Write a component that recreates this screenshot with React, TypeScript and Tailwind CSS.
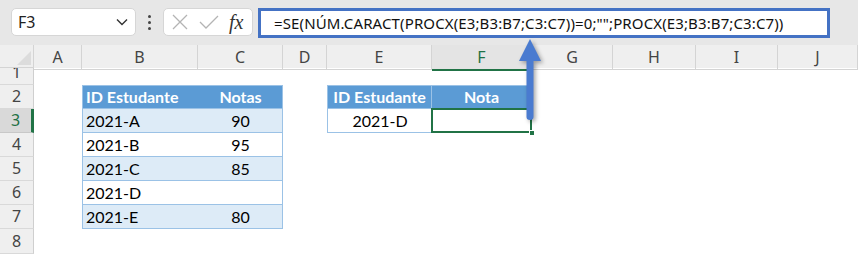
import React from "react";

const cellFont = { fontFamily: "Lato, 'Open Sans', sans-serif" };
const uiFont = { fontFamily: "'Noto Sans', 'Open Sans', sans-serif" };

const cols = ["A", "B", "C", "D", "E", "F", "G", "H", "I", "J"];

function ColHeader({ l }: { l: string }) {
  const sel = l === "F";
  return (
    <div
      className={`flex items-center justify-center border-r border-[#d4d4d4] text-[16px] ${
        sel ? "text-[#1e7145] border-b-2 border-b-[#217346] bg-[#e4e4e4]" : "text-[#444] border-b border-b-[#d4d4d4]"
      }`}
      style={uiFont}
    >
      {l}
    </div>
  );
}

function RowHeader({ n, row }: { n: number; row: number }) {
  const sel = n === 3;
  const rs = [
    "row-start-2",
    "row-start-3",
    "row-start-4",
    "row-start-5",
    "row-start-6",
    "row-start-7",
    "row-start-8",
    "row-start-9",
  ][row];
  return (
    <div
      className={`col-start-1 ${rs} flex items-end justify-center border-b text-[16px] leading-none pb-[4px] ${
        sel
          ? "bg-[#d9d9d9] text-[#1e7145] border-r-[3px] border-r-[#217346] border-b-[#c8c8c8]"
          : "bg-[#efefef] text-[#444] border-r border-r-[#cfcfcf] border-b-[#d9d9d9]"
      }`}
      style={uiFont}
    >
      {n}
    </div>
  );
}

export default function App() {
  const t1 = [
    ["2021-A", "90"],
    ["2021-B", "95"],
    ["2021-C", "85"],
    ["2021-D", ""],
    ["2021-E", "80"],
  ];
  return (
    <div className="relative w-[858px] h-[254px] overflow-hidden bg-white">
      {/* toolbar */}
      <div className="h-[45px] bg-[#e7e7e7] flex items-start pt-[8px]">
        <div className="ml-[11px] w-[125px] h-[28px] bg-white rounded-[5px] border border-[#d6d6d6] flex items-center justify-between pl-[6px] pr-[6px]">
          <span className="text-[16px] text-[#222]" style={uiFont}>F3</span>
          <svg width="14" height="10" viewBox="0 0 14 10">
            <path d="M2 2.5 L7 7.5 L12 2.5" fill="none" stroke="#333" strokeWidth="1.4" />
          </svg>
        </div>
        <div className="w-[27px] h-[28px] flex flex-col items-center justify-center gap-[3px]">
          <div className="w-[3px] h-[3px] bg-[#444] rounded-full" />
          <div className="w-[3px] h-[3px] bg-[#444] rounded-full" />
          <div className="w-[3px] h-[3px] bg-[#444] rounded-full" />
        </div>
        <div className="w-[90px] h-[28px] bg-white rounded-[5px] border border-[#d6d6d6] flex items-center pl-[7px] gap-[10px]">
          <svg width="18" height="18" viewBox="0 0 18 18">
            <path d="M2 2 L16 16 M16 2 L2 16" stroke="#b4b4b4" strokeWidth="1.3" />
          </svg>
          <svg width="20" height="16" viewBox="0 0 20 16">
            <path d="M1 8 L7 14 L19 2" fill="none" stroke="#b4b4b4" strokeWidth="1.3" />
          </svg>
          <span
            className="text-[20px] italic text-[#333] leading-none"
            style={{ fontFamily: "'Liberation Serif', serif" }}
          >
            fx
          </span>
        </div>
        <div className="ml-[5px] w-[572px] h-[30px] bg-white border-[3px] border-[#4472c4] flex items-center pl-[13px]">
          <span className="text-[15px] text-[#111] whitespace-nowrap tracking-[0.12px]" style={uiFont}>
            =SE(NÚM.CARACT(PROCX(E3;B3:B7;C3:C7))=0;"";PROCX(E3;B3:B7;C3:C7))
          </span>
        </div>
      </div>

      {/* sheet */}
      <div className="grid grid-cols-[34px_48px_116px_85px_44px_105px_100px_81px_83px_82px_1fr] grid-rows-[23px_17px_24px_24px_24px_24px_24px_24px_25px] bg-white">
        <div className="col-start-1 row-start-1 bg-[#efefef] border-r border-b border-[#d4d4d4] relative">
          <svg className="absolute right-[2px] bottom-[2px]" width="14" height="14" viewBox="0 0 14 14">
            <path d="M14 0 L14 14 L0 14 Z" fill="#dcdcdc" />
          </svg>
        </div>
        {cols.map((c) => (
          <div key={c} className="row-start-1 bg-[#efefef] grid">
            <ColHeader l={c} />
          </div>
        ))}
        <div className="row-start-1 bg-[#efefef] border-b border-[#d4d4d4]" />
        {[1, 2, 3, 4, 5, 6, 7, 8].map((n, i) => (
          <RowHeader key={n} n={n} row={i} />
        ))}

        {/* Table 1 */}
        <div className="col-start-3 col-span-2 row-start-3 row-span-6 flex flex-col" style={cellFont}>
          <div className="h-[24px] bg-[#5b9bd5] border border-[#9bc2e6] flex items-center text-white font-bold text-[16px]">
            <div className="w-[116px] pl-[3px]">ID Estudante</div>
            <div className="flex-1 text-center">Notas</div>
          </div>
          {t1.map((r, i) => (
            <div
              key={r[0]}
              className={`h-[24px] border-x border-b border-[#9bc2e6] flex items-center text-[16px] text-black ${
                i % 2 === 0 ? "bg-[#ddebf7]" : "bg-white"
              }`}
            >
              <div className="w-[116px] pl-[3px]">{r[0]}</div>
              <div className="flex-1 text-center">{r[1]}</div>
            </div>
          ))}
        </div>

        {/* Table 2 */}
        <div className="col-start-6 col-span-2 row-start-3 row-span-2 flex flex-col" style={cellFont}>
          <div className="h-[24px] bg-[#5b9bd5] border border-[#9bc2e6] flex items-center text-white font-bold text-[16px]">
            <div className="w-[104px] text-center border-r border-[#9bc2e6] h-full flex items-center justify-center">
              ID Estudante
            </div>
            <div className="flex-1 text-center">Nota</div>
          </div>
          <div className="h-[24px] border-x border-b border-[#9bc2e6] flex text-[16px] text-black bg-white">
            <div className="w-[104px] flex items-center justify-center">2021-D</div>
            <div className="flex-1 relative">
              <div className="absolute -left-[1px] -top-[1px] -right-[1px] -bottom-[1px] border-2 border-[#217346]" />
              <div className="absolute -right-[4px] -bottom-[4px] w-[6px] h-[6px] bg-[#217346] border border-white" />
            </div>
          </div>
        </div>
      </div>

      {/* arrow */}
      <svg
        className="absolute left-[512px] top-[36px]"
        width="36"
        height="92"
        viewBox="0 0 36 92"
        style={{ filter: "drop-shadow(2px 2px 2px rgba(0,0,0,0.35))" }}
      >
        <path
          d="M18 3 L29 25 L21.5 25 L21.5 81 Q21.5 84 18 84 Q14.5 84 14.5 81 L14.5 25 L7 25 Z"
          fill="#4a7bd0"
        />
      </svg>
    </div>
  );
}
